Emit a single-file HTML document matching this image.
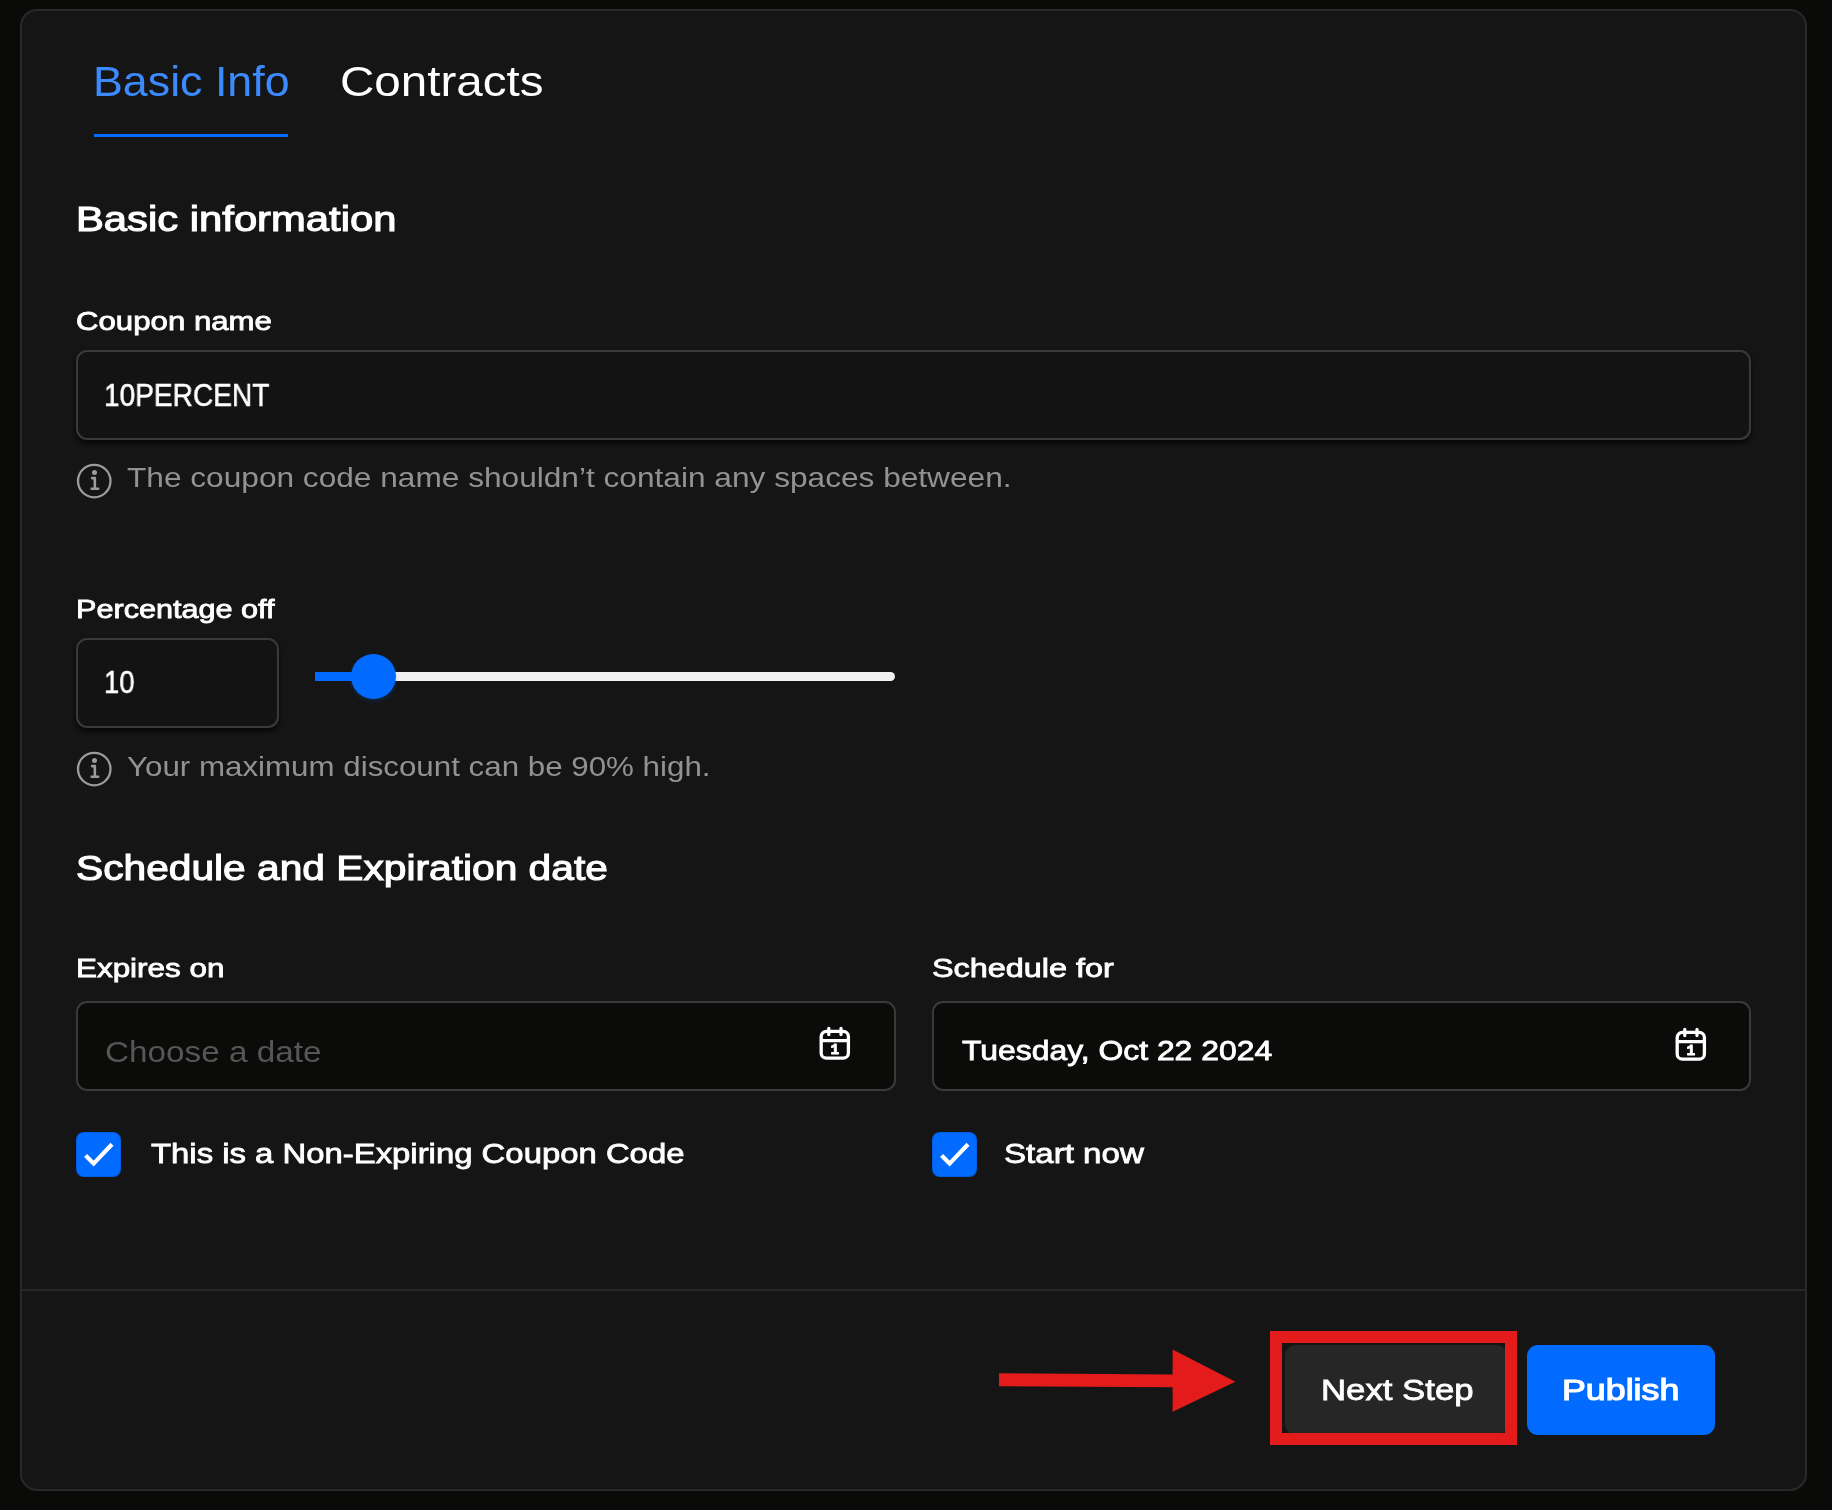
<!DOCTYPE html>
<html lang="en">
<head>
<meta charset="utf-8">
<title>Create coupon</title>
<style>
*{box-sizing:border-box;margin:0;padding:0}
html,body{width:1832px;height:1510px;overflow:hidden;background:#0a0a09}
body{position:relative;font-family:"Liberation Sans",sans-serif;-webkit-font-smoothing:antialiased}
.abs{position:absolute}
.card{position:absolute;left:20px;top:9px;width:1787px;height:1482px;background:#151515;border:2px solid #292929;border-radius:17px}
.tabline{position:absolute;left:22px;top:137px;width:1783px;height:1px;background:#131313}
.underline{position:absolute;left:94px;top:134px;width:194px;height:3px;background:#016cff}
.t{position:absolute;white-space:nowrap;transform-origin:0 50%;font-weight:400;will-change:transform}
.inp{position:absolute;border:2px solid #3a3a3a;border-radius:11px;height:90px}
.inp.sh{background:#131313;box-shadow:0 3px 5px rgba(0,0,0,.75)}
.inp.dk{background:#0b0b0a}
.track{position:absolute;left:315px;top:672px;width:580px;height:9px;background:#f2f2f2;border-radius:0 5px 5px 0}
.fill{position:absolute;left:315px;top:672px;width:60px;height:9px;background:#016bff}
.thumb{position:absolute;left:351px;top:654px;width:45px;height:45px;border-radius:50%;background:#016bff;box-shadow:0 2px 4px rgba(1,107,255,.22)}
.cb{position:absolute;width:45px;height:45px;border-radius:8px;background:#016bff;box-shadow:inset 0 0 0 1px rgba(0,0,0,.12)}
.footline{position:absolute;left:22px;top:1289px;width:1783px;height:2px;background:#262626}
.btn{position:absolute;top:1345px;height:90px;border-radius:11px}
.next{left:1285px;width:222px;background:#262626}
.pub{left:1527px;width:188px;background:#016bff}
.redbox{position:absolute;left:1270px;top:1330.5px;width:247px;height:114px;border:12.5px solid #e31b1b}
svg{position:absolute;overflow:visible;will-change:transform}
</style>
</head>
<body>
<div class="card"></div>
<div class="tabline"></div>
<div class="underline"></div>

<!-- coupon name input -->
<div class="inp sh" style="left:76px;top:350px;width:1675px"></div>
<!-- percentage input -->
<div class="inp sh" style="left:76px;top:638px;width:203px"></div>
<!-- slider -->
<div class="track"></div><div class="fill"></div><div class="thumb"></div>
<!-- date inputs -->
<div class="inp dk" style="left:76px;top:1001px;width:820px"></div>
<div class="inp dk" style="left:932px;top:1001px;width:819px"></div>

<!-- info icons -->
<svg style="left:77px;top:464px" width="35" height="35" viewBox="0 0 35 35"><circle cx="17.25" cy="17.05" r="16.25" fill="none" stroke="#9c9c9c" stroke-width="2.3"/><circle cx="17.5" cy="8.4" r="2.5" fill="#9c9c9c"/><path d="M15.1 14.1H17.85V24.8M14.7 24.8H21.2" fill="none" stroke="#9c9c9c" stroke-width="2.6" stroke-linecap="round" stroke-linejoin="round"/></svg>
<svg style="left:77px;top:752px" width="35" height="35" viewBox="0 0 35 35"><circle cx="17.25" cy="17.05" r="16.25" fill="none" stroke="#9c9c9c" stroke-width="2.3"/><circle cx="17.5" cy="8.4" r="2.5" fill="#9c9c9c"/><path d="M15.1 14.1H17.85V24.8M14.7 24.8H21.2" fill="none" stroke="#9c9c9c" stroke-width="2.6" stroke-linecap="round" stroke-linejoin="round"/></svg>

<!-- calendar icons -->
<svg style="left:819px;top:1026px" width="32" height="35" viewBox="0 0 32 35"><g fill="none" stroke="#fff" stroke-width="3.3" stroke-linecap="round"><rect x="2.2" y="5.4" width="27.2" height="26.8" rx="5.2"/><path d="M2.4 14.6h26.8M9.8 2.4v6.2M22 2.4v6.2"/></g><text x="15.9" y="28.2" text-anchor="middle" font-family="Liberation Mono, monospace" font-weight="700" font-size="14.5" fill="#fff" stroke="#fff" stroke-width="0.9" stroke-linejoin="round">1</text></svg>
<svg style="left:1674.6px;top:1027px" width="32" height="35" viewBox="0 0 32 35"><g fill="none" stroke="#fff" stroke-width="3.3" stroke-linecap="round"><rect x="2.2" y="5.4" width="27.2" height="26.8" rx="5.2"/><path d="M2.4 14.6h26.8M9.8 2.4v6.2M22 2.4v6.2"/></g><text x="15.9" y="28.2" text-anchor="middle" font-family="Liberation Mono, monospace" font-weight="700" font-size="14.5" fill="#fff" stroke="#fff" stroke-width="0.9" stroke-linejoin="round">1</text></svg>

<!-- checkboxes -->
<div class="cb" style="left:76px;top:1132px"></div>
<svg style="left:76px;top:1132px" width="45" height="45" viewBox="0 0 45 45"><path d="M9.6 23.6 17.6 31.6 36 12.2" fill="none" stroke="#fff" stroke-width="4.2"/></svg>
<div class="cb" style="left:932px;top:1132px"></div>
<svg style="left:932px;top:1132px" width="45" height="45" viewBox="0 0 45 45"><path d="M9.6 23.6 17.6 31.6 36 12.2" fill="none" stroke="#fff" stroke-width="4.2"/></svg>

<!-- footer -->
<div class="footline"></div>
<div class="btn next"></div>
<div class="btn pub"></div>
<div class="redbox"></div>
<svg style="left:995px;top:1345px" width="245" height="72" viewBox="995 1345 245 72"><path d="M999 1373.2 1172.6 1374.4 1172.6 1349.6 1235.4 1381.8 1172.6 1411.8 1172.6 1387.2 999 1386.2Z" fill="#e31b1b"/></svg>

<div class="t" style="left:93.24px;top:60.57px;font-size:42.44px;line-height:42.44px;color:#3b8bff;transform:scaleX(1.0548);">Basic Info</div>
<div class="t" style="left:340.26px;top:60.57px;font-size:42.44px;line-height:42.44px;color:#ffffff;transform:scaleX(1.1212);">Contracts</div>
<div class="t" style="left:76.13px;top:202.32px;font-size:34.3px;line-height:34.3px;color:#ffffff;transform:scaleX(1.2181);-webkit-text-stroke:1.1px #ffffff;">Basic information</div>
<div class="t" style="left:76.26px;top:308.77px;font-size:25.44px;line-height:25.44px;color:#ffffff;transform:scaleX(1.2260);-webkit-text-stroke:0.8px #ffffff;">Coupon name</div>
<div class="t" style="left:104.32px;top:379.72px;font-size:31.1px;line-height:31.1px;color:#ffffff;transform:scaleX(0.9027);-webkit-text-stroke:0.5px #ffffff;">10PERCENT</div>
<div class="t" style="left:127.20px;top:464.06px;font-size:28.05px;line-height:28.05px;color:#929292;transform:scaleX(1.1278);">The coupon code name shouldn’t contain any spaces between.</div>
<div class="t" style="left:75.57px;top:596.97px;font-size:25.44px;line-height:25.44px;color:#ffffff;transform:scaleX(1.2032);-webkit-text-stroke:0.8px #ffffff;">Percentage off</div>
<div class="t" style="left:104.35px;top:666.92px;font-size:31.1px;line-height:31.1px;color:#ffffff;transform:scaleX(0.8843);-webkit-text-stroke:0.5px #ffffff;">10</div>
<div class="t" style="left:126.90px;top:752.66px;font-size:28.05px;line-height:28.05px;color:#929292;transform:scaleX(1.1161);">Your maximum discount can be 90% high.</div>
<div class="t" style="left:76.47px;top:851.32px;font-size:34.3px;line-height:34.3px;color:#ffffff;transform:scaleX(1.1869);-webkit-text-stroke:1.1px #ffffff;">Schedule and Expiration date</div>
<div class="t" style="left:76.02px;top:955.57px;font-size:25.44px;line-height:25.44px;color:#ffffff;transform:scaleX(1.2348);-webkit-text-stroke:0.8px #ffffff;">Expires on</div>
<div class="t" style="left:105.18px;top:1036.70px;font-size:29.65px;line-height:29.65px;color:#565656;transform:scaleX(1.1232);">Choose a date</div>
<div class="t" style="left:931.94px;top:955.57px;font-size:25.44px;line-height:25.44px;color:#ffffff;transform:scaleX(1.2735);-webkit-text-stroke:0.8px #ffffff;">Schedule for</div>
<div class="t" style="left:961.96px;top:1037.05px;font-size:27.47px;line-height:27.47px;color:#ffffff;transform:scaleX(1.1605);-webkit-text-stroke:0.8px #ffffff;">Tuesday, Oct 22 2024</div>
<div class="t" style="left:150.77px;top:1139.70px;font-size:27.76px;line-height:27.76px;color:#ffffff;transform:scaleX(1.1844);-webkit-text-stroke:0.8px #ffffff;">This is a Non-Expiring Coupon Code</div>
<div class="t" style="left:1003.58px;top:1139.90px;font-size:27.76px;line-height:27.76px;color:#ffffff;transform:scaleX(1.1926);-webkit-text-stroke:0.8px #ffffff;">Start now</div>
<div class="t" style="left:1320.97px;top:1374.08px;font-size:30.38px;line-height:30.38px;color:#ffffff;transform:scaleX(1.1441);-webkit-text-stroke:0.8px #ffffff;">Next Step</div>
<div class="t" style="left:1562.12px;top:1375.17px;font-size:29.8px;line-height:29.8px;color:#ffffff;transform:scaleX(1.2008);-webkit-text-stroke:1.2px #ffffff;">Publish</div>
</body>
</html>
